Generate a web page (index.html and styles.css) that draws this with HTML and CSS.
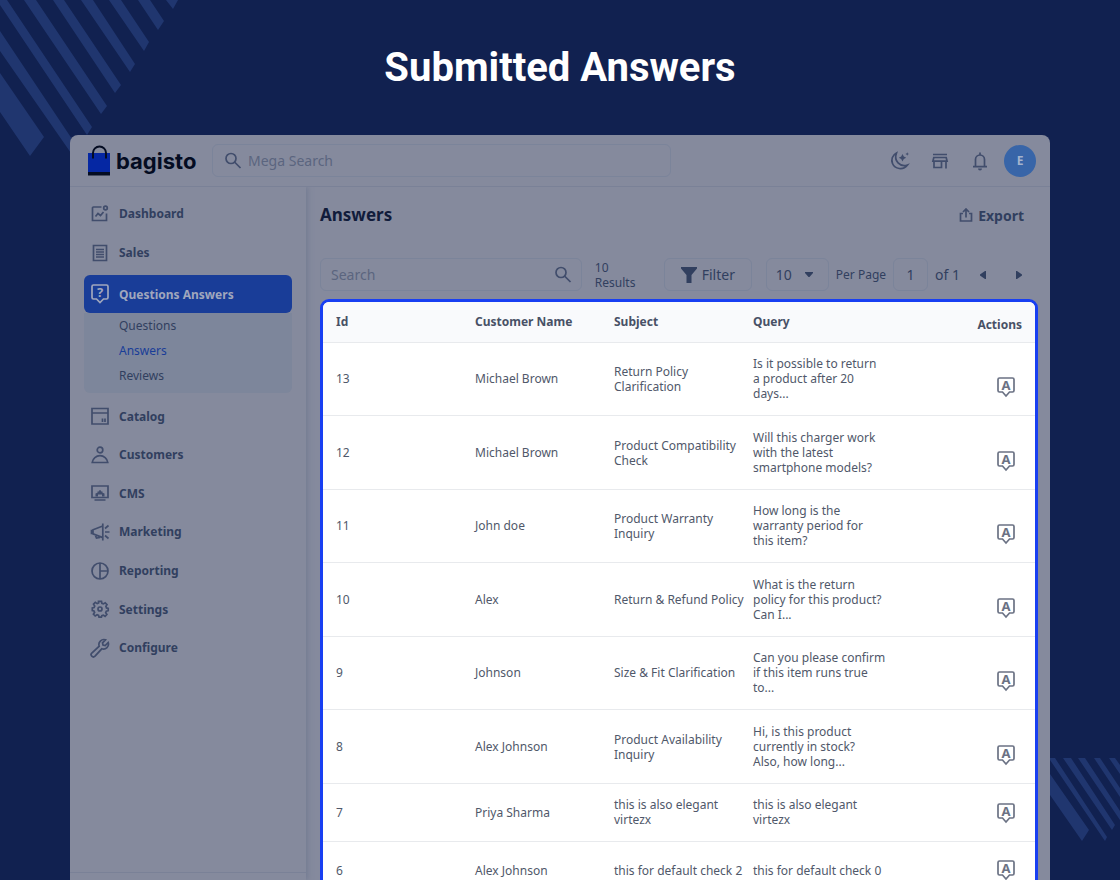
FILE: index.html
```html
<!DOCTYPE html>
<html lang="en">
<head>
  <meta charset="UTF-8" />
  <meta name="viewport" content="width=device-width, initial-scale=1.0" />
  <title>Submitted Answers</title>
  <link rel="stylesheet" href="styles.css">
</head>
<body>

  <!-- background stripes -->
  <svg class="stripes stripes-top" width="180" height="158" viewBox="0 0 180 158" aria-hidden="true">
    <path d="M0 73L44 137L30 156L0 112zM0 31L78 148L73 156L0 51zM0 0H7L92 127L87 135L0 5zM24 0H36L107 106L101 114zM53 0H64L121 85L115 93zM81 0H93L135 64L130 72zM109 0H121L149 42L144 51zM138 0H150L164 21L158 30zM166 0H178L173 9z"/>
  </svg>
  <svg class="stripes stripes-bottom" width="70" height="84" viewBox="0 0 70 84" aria-hidden="true">
    <path d="M0 16L39 72L32 83L0 37zM0 0H5L57 79L55 83L0 2zM13 0H21L65 67L62 72zM28 0H35L70 53V62zM44 0H50L70 30V39zM59 0H65L70 7V16z"/>
  </svg>

  <h1 class="page-title">Submitted Answers</h1>

  <div class="panel">
    <header class="topbar">
      <a class="logo" href="#">
        <svg width="22" height="31" viewBox="0 0 22 31" aria-hidden="true">
          <path fill="#0527a3" d="M0 8h22v19H0z"/>
          <path fill="#040c22" d="M0 27h22v3.500H0z"/>
          <path fill="none" stroke="#040c22" stroke-width="2" d="M5 13.500V8a6.500 6.500 0 0 1 13 0v5.500"/>
        </svg>
        <span>bagisto</span>
      </a>
      <label class="mega-search">
        <svg class="icon" width="18" height="18" viewBox="0 0 18 18"><circle cx="7" cy="6.500" r="5"/><path d="M10.500 10L16.500 16"/></svg>
        <input type="text" placeholder="Mega Search" aria-label="Mega Search">
      </label>
      <div class="top-actions">
        <button aria-label="Dark mode">
          <svg class="icon" width="20" height="20" viewBox="0 0 20 20"><path d="M6.500 2C2.500 4 .8 8.500 2.500 12.500c2.300 5.500 10.500 7.300 15 1.500C10 16.500 3.500 10 6.500 2z"/><path class="solid" d="M12.500 3l1.300 2.400 2.400 1.300-2.400 1.300-1.300 2.400-1.300-2.400-2.400-1.300 2.400-1.300zM17.200 1.200l.6 1.200 1.200.6-1.200.6-.6 1.200-.6-1.200-1.200-.6 1.200-.6z"/></svg>
        </button>
        <button aria-label="Visit shop">
          <svg class="icon" width="18" height="18" viewBox="0 0 18 18"><path d="M2 2.500h14M2.800 5.500h12.400l.9 3.700H1.900zM3 9.500v6h7.500v-6M15 9.500v7"/></svg>
        </button>
        <button aria-label="Notifications">
          <svg class="icon" width="18" height="20" viewBox="0 0 18 20"><path d="M4.500 15.500V8.500a4.500 4.500 0 0 1 9 0v7M2 15.700h14M9 1.500v2"/><path class="solid" d="M7 17.500h4a2 2 0 0 1-4 0z"/></svg>
        </button>
        <button class="avatar">E</button>
      </div>
    </header>

    <div class="body">
      <aside class="sidebar">
        <nav>
          <div class="nav-group nav-first">
            <a href="#"><svg class="icon" width="20" height="20" viewBox="0 0 20 20"><path d="M11.500 3H3.500a1 1 0 0 0-1 1v12.500h14V9.500M5.500 12.500l2.500-3 2.500 2 3-3.500"/><circle cx="15.500" cy="4" r="1.800"/></svg>Dashboard</a>
            <a href="#"><svg class="icon" width="20" height="20" viewBox="0 0 20 20"><path d="M3.500 2.500h13v15h-13zM6 6.500h8M6 9h8M6 11.500h8M6 14h8"/></svg>Sales</a>
          </div>
          <div class="nav-open">
            <a class="active" href="#"><svg class="icon" width="20" height="22" viewBox="0 0 20 22"><path d="M3.500 2h13A1.500 1.500 0 0 1 18 3.500v11a1.500 1.500 0 0 1-1.500 1.500h-3L10 19.500 6.500 16h-3A1.500 1.500 0 0 1 2 14.500v-11A1.500 1.500 0 0 1 3.500 2z"/><text x="10" y="13.500" text-anchor="middle">?</text></svg>Questions Answers</a>
            <div class="subnav">
              <a href="#">Questions</a>
              <a class="current" href="#">Answers</a>
              <a href="#">Reviews</a>
            </div>
          </div>
          <div class="nav-group nav-rest">
            <a href="#"><svg class="icon" width="20" height="20" viewBox="0 0 20 20"><path d="M2 2.500h16v15.500H2zM2 7h16M12.500 12.500v3.500M15 12.500v3.500"/></svg>Catalog</a>
            <a href="#"><svg class="icon" width="20" height="20" viewBox="0 0 20 20"><circle cx="10" cy="5" r="2.800"/><path d="M2.200 17.500c.5-4 4-6.800 7.800-6.800s7.300 2.800 7.800 6.800z"/></svg>Customers</a>
            <a href="#"><svg class="icon" width="20" height="20" viewBox="0 0 20 20"><path d="M2 3h16v11.500H2zM4.500 17h11"/><path class="solid" d="M5.500 13.500v-3l2-.7V8.500h1.200l.6-1.200h1.400l.6 1.200h1.200v1.300l2 .7v3h-2.500v-2h-4v2z"/></svg>CMS</a>
            <a href="#"><svg class="icon" width="20" height="20" viewBox="0 0 20 20"><path d="M12.800 1.500v17M12.800 4L3 7.800v4l9.800 3.800M3 8.500H1.500v3H3M5 12.500l1.500 3.500 3.500-.5M15 10h4.500M15 6.500l3.500-3M15 13.500l3.500 3"/></svg>Marketing</a>
            <a href="#"><svg class="icon" width="20" height="20" viewBox="0 0 20 20"><circle cx="10" cy="10" r="8"/><path d="M10 2v16M10 10h8"/></svg>Reporting</a>
            <a href="#"><svg class="icon" width="20" height="20" viewBox="0 0 20 20"><path d="M8.500 2.300h3l.4 2 1.500.6 1.800-1.100 1.800 1.800-1.100 1.800.6 1.500 1.700.4v2.400l-1.900.5-.6 1.500 1.200 1.800-1.800 1.800-1.800-1.200-1.500.6-.4 1.400h-2.400l-.4-1.700-1.500-.6-1.900 1.200-1.800-1.800 1.200-1.900-.6-1.400-1.700-.4V8.900l1.800-.4.6-1.400-1.200-1.900 1.800-1.800 1.900 1.200 1.400-.6z"/><circle cx="10" cy="10" r="2"/></svg>Settings</a>
            <a href="#"><svg class="icon" width="20" height="20" viewBox="0 0 20 20"><path d="M15.500 1.800a5 5 0 0 0-6.300 6.400L1.800 15a2.200 2.200 0 0 0 3.200 3.200l6.800-7.400a5 5 0 0 0 6.400-6.300l-3 3-2.200-.5-.5-2.200z"/></svg>Configure</a>
          </div>
        </nav>
        <div class="sidebar-foot"></div>
      </aside>

      <main>
        <div class="heading">
          <h2>Answers</h2>
          <button class="export">
            <svg class="icon" width="14" height="14" viewBox="0 0 14 14"><path d="M4 5.500H1.500V13h11V5.500H10M7 9.500V1.500M4 4l3-3 3 3"/></svg>
            Export
          </button>
        </div>

        <div class="toolbar">
          <label class="table-search">
            <input type="text" placeholder="Search" aria-label="Search">
            <svg class="icon" width="18" height="18" viewBox="0 0 18 18"><circle cx="7" cy="6.500" r="5"/><path d="M10.500 10L16.500 16"/></svg>
          </label>
          <p class="results">10 Results</p>
          <button class="filter">
            <svg width="16" height="16" viewBox="0 0 16 16" aria-hidden="true"><path fill="currentColor" d="M0 0h16v1.500L10.500 8v8h-5V8L0 1.500z"/></svg>
            Filter
          </button>
          <div class="per-page">
            <select id="perPage"><option>10</option><option>20</option><option>50</option></select>
            <svg class="caret" width="8" height="6" viewBox="0 0 8 6" aria-hidden="true"><path fill="currentColor" d="M0 0h8v1L4.500 5h-1L0 1z"/></svg>
          </div>
          <label class="per-page-label" for="perPage">Per Page</label>
          <input class="page-no" type="text" value="1" aria-label="Page">
          <span class="page-of">of 1</span>
          <div class="pager">
            <button aria-label="Previous page"><svg width="6" height="8" viewBox="0 0 6 8"><path fill="currentColor" d="M6 0v8H5L0 4.500v-1L5 0z"/></svg></button>
            <button aria-label="Next page"><svg width="6" height="8" viewBox="0 0 6 8"><path fill="currentColor" d="M0 0h1l5 3.500v1L1 8H0z"/></svg></button>
          </div>
        </div>

        <div class="table-box">
          <table>
            <thead>
              <tr><th>Id</th><th>Customer Name</th><th>Subject</th><th>Query</th><th>Actions</th></tr>
            </thead>
            <tbody>
              <tr><td>13</td><td>Michael Brown</td><td>Return Policy Clarification</td><td>Is it possible to return a product after 20 days...</td><td><a href="#" aria-label="Answer 13"><svg class="icon" width="20" height="22" viewBox="0 0 20 22"><path d="M3.500 2h13A1.500 1.500 0 0 1 18 3.500v11a1.500 1.500 0 0 1-1.500 1.500h-3L10 20 6.500 16h-3A1.500 1.500 0 0 1 2 14.500v-11A1.500 1.500 0 0 1 3.500 2z"/><text x="10" y="13.500" text-anchor="middle">A</text></svg></a></td></tr>
              <tr><td>12</td><td>Michael Brown</td><td>Product Compatibility Check</td><td>Will this charger work with the latest smartphone models?</td><td><a href="#" aria-label="Answer 12"><svg class="icon" width="20" height="22" viewBox="0 0 20 22"><path d="M3.500 2h13A1.500 1.500 0 0 1 18 3.500v11a1.500 1.500 0 0 1-1.500 1.500h-3L10 20 6.500 16h-3A1.500 1.500 0 0 1 2 14.500v-11A1.500 1.500 0 0 1 3.500 2z"/><text x="10" y="13.500" text-anchor="middle">A</text></svg></a></td></tr>
              <tr><td>11</td><td>John doe</td><td>Product Warranty Inquiry</td><td>How long is the warranty period for this item?</td><td><a href="#" aria-label="Answer 11"><svg class="icon" width="20" height="22" viewBox="0 0 20 22"><path d="M3.500 2h13A1.500 1.500 0 0 1 18 3.500v11a1.500 1.500 0 0 1-1.500 1.500h-3L10 20 6.500 16h-3A1.500 1.500 0 0 1 2 14.500v-11A1.500 1.500 0 0 1 3.500 2z"/><text x="10" y="13.500" text-anchor="middle">A</text></svg></a></td></tr>
              <tr><td>10</td><td>Alex</td><td>Return &amp; Refund Policy</td><td>What is the return policy for this product? Can I...</td><td><a href="#" aria-label="Answer 10"><svg class="icon" width="20" height="22" viewBox="0 0 20 22"><path d="M3.500 2h13A1.500 1.500 0 0 1 18 3.500v11a1.500 1.500 0 0 1-1.500 1.500h-3L10 20 6.500 16h-3A1.500 1.500 0 0 1 2 14.500v-11A1.500 1.500 0 0 1 3.500 2z"/><text x="10" y="13.500" text-anchor="middle">A</text></svg></a></td></tr>
              <tr><td>9</td><td>Johnson</td><td>Size &amp; Fit Clarification</td><td>Can you please confirm if this item runs true to...</td><td><a href="#" aria-label="Answer 9"><svg class="icon" width="20" height="22" viewBox="0 0 20 22"><path d="M3.500 2h13A1.500 1.500 0 0 1 18 3.500v11a1.500 1.500 0 0 1-1.500 1.500h-3L10 20 6.500 16h-3A1.500 1.500 0 0 1 2 14.500v-11A1.500 1.500 0 0 1 3.500 2z"/><text x="10" y="13.500" text-anchor="middle">A</text></svg></a></td></tr>
              <tr><td>8</td><td>Alex Johnson</td><td>Product Availability Inquiry</td><td>Hi, is this product currently in stock? Also,&nbsp;how long...</td><td><a href="#" aria-label="Answer 8"><svg class="icon" width="20" height="22" viewBox="0 0 20 22"><path d="M3.500 2h13A1.500 1.500 0 0 1 18 3.500v11a1.500 1.500 0 0 1-1.500 1.500h-3L10 20 6.500 16h-3A1.500 1.500 0 0 1 2 14.500v-11A1.500 1.500 0 0 1 3.500 2z"/><text x="10" y="13.500" text-anchor="middle">A</text></svg></a></td></tr>
              <tr><td>7</td><td>Priya Sharma</td><td>this is also elegant virtezx</td><td>this is also elegant virtezx</td><td><a href="#" aria-label="Answer 7"><svg class="icon" width="20" height="22" viewBox="0 0 20 22"><path d="M3.500 2h13A1.500 1.500 0 0 1 18 3.500v11a1.500 1.500 0 0 1-1.500 1.500h-3L10 20 6.500 16h-3A1.500 1.500 0 0 1 2 14.500v-11A1.500 1.500 0 0 1 3.500 2z"/><text x="10" y="13.500" text-anchor="middle">A</text></svg></a></td></tr>
              <tr><td>6</td><td>Alex Johnson</td><td>this for default check 2</td><td>this for default check 0</td><td><a href="#" aria-label="Answer 6"><svg class="icon" width="20" height="22" viewBox="0 0 20 22"><path d="M3.500 2h13A1.500 1.500 0 0 1 18 3.500v11a1.500 1.500 0 0 1-1.500 1.500h-3L10 20 6.500 16h-3A1.500 1.500 0 0 1 2 14.500v-11A1.500 1.500 0 0 1 3.500 2z"/><text x="10" y="13.500" text-anchor="middle">A</text></svg></a></td></tr>
            </tbody>
          </table>
        </div>
      </main>
    </div>
  </div>

</body>
</html>
```
FILE: styles.css
```css
* { box-sizing: border-box; }

body {
  margin: 0;
  height: 100vh;
  display: flex;
  flex-direction: column;
  position: relative;
  overflow: hidden;
  background: #112150;
  color: #313f5f;
  font-family: "Noto Sans", sans-serif;
  font-size: 12px;
  line-height: 15px;
}

a { color: inherit; text-decoration: none; }

button, input, select {
  margin: 0;
  padding: 0;
  border: none;
  background: none;
  color: inherit;
  font-family: inherit;
  font-size: 14px;
}

button { cursor: pointer; }

svg { display: block; flex: none; }

.icon {
  fill: none;
  stroke: #414d6c;
  stroke-width: 1.7;
}

.icon .solid { fill: #414d6c; stroke: none; }

.icon text {
  font-size: 13px;
  font-weight: bold;
  stroke: none;
}

.stripes { position: absolute; fill: #20366f; }
.stripes-top { top: 0; left: 0; }
.stripes-bottom { right: 0; bottom: 38px; }

.page-title {
  margin: 0;
  padding: 44px 0 43px;
  font-family: Roboto, sans-serif;
  font-size: 40px;
  font-weight: bold;
  line-height: 48px;
  text-align: center;
  color: #fff;
}

.panel {
  flex: 1;
  min-height: 0;
  margin: 0 70px;
  display: flex;
  flex-direction: column;
  position: relative;
  overflow: hidden;
  border-radius: 8px 8px 0 0;
  background: #858a9d;
}

/* top bar */

.topbar {
  height: 52px;
  flex: none;
  display: flex;
  align-items: center;
  padding: 0 14px 0 18px;
  border-bottom: 1px solid #7a8197;
}

.logo {
  width: 124px;
  display: flex;
  align-items: center;
  gap: 6px;
  font-family: Inter, sans-serif;
  font-size: 22px;
  font-weight: bold;
  line-height: 28px;
  color: #040c22;
}

.mega-search {
  flex: 0 1 459px;
  height: 33px;
  display: flex;
  align-items: center;
  gap: 6px;
  padding: 0 11px;
  border: 1px solid #7b849a;
  border-radius: 6px;
}

.mega-search input, .table-search input { flex: 1; min-width: 0; outline: none; }

input::placeholder { color: #5b657f; opacity: 1; }

.top-actions {
  margin-left: auto;
  display: flex;
  align-items: center;
  gap: 4px;
}

.top-actions button {
  width: 36px;
  height: 32px;
  display: flex;
  align-items: center;
  justify-content: center;
}

.top-actions .avatar {
  width: 32px;
  margin-left: 2px;
  border-radius: 50%;
  background: #3865a8;
  color: #a3b3cd;
  font-size: 12px;
  font-weight: bold;
}

.body { flex: 1; min-height: 0; display: flex; }

/* sidebar */

.sidebar {
  width: 236px;
  flex: none;
  display: flex;
  flex-direction: column;
  box-shadow: 2px 0 5px #747c93;
  clip-path: inset(0 -10px 0 0);
}

.sidebar nav {
  padding: 7px 14px 0;
  font-weight: bold;
}

.nav-group { display: grid; grid-auto-rows: 1fr; }
.nav-first { height: 78px; margin-bottom: 3px; }
.nav-rest { height: 270px; margin-top: 4px; }

.nav-group a, .nav-open .active {
  display: flex;
  align-items: center;
  gap: 9px;
  padding: 0 6px;
}

.nav-open .active {
  height: 38px;
  border-radius: 6px;
  background: #193d98;
  color: #a0a7bd;
}

.active .icon { stroke: #a0a7bd; }
.active .icon text { fill: #a0a7bd; }

.subnav {
  height: 80px;
  display: flex;
  flex-direction: column;
  gap: 10px;
  padding: 5px 35px;
  border-radius: 0 0 6px 6px;
  background: #7d869b;
  font-weight: normal;
}

.subnav .current { color: #193d98; }

.sidebar-foot {
  height: 8px;
  margin-top: auto;
  border-top: 1px solid #7a8197;
}

/* content */

main {
  flex: 1;
  min-width: 0;
  padding: 14px 12px 0 14px;
}

.heading {
  height: 28px;
  display: flex;
  align-items: center;
  justify-content: space-between;
}

.heading h2 {
  margin: 0;
  font-size: 17px;
  line-height: 24px;
  color: #111c3b;
}

.export {
  display: flex;
  align-items: center;
  gap: 5px;
  padding-right: 14px;
  font-weight: bold;
}

.toolbar {
  height: 33px;
  margin: 29px 0 8px;
  display: flex;
  align-items: center;
  font-size: 14px;
}

.table-search {
  flex: 1;
  height: 33px;
  display: flex;
  align-items: center;
  padding: 0 9px 0 10px;
  border: 1px solid #7b849a;
  border-radius: 6px;
}

.results {
  width: 48px;
  margin: 0 21px 0 13px;
  font-size: 12px;
}

.filter {
  width: 88px;
  height: 33px;
  display: flex;
  align-items: center;
  justify-content: center;
  gap: 5px;
  border: 1px solid #7b849a;
  border-radius: 6px;
}

.per-page { position: relative; margin: 0 7px 0 14px; }

.per-page select {
  appearance: none;
  width: 63px;
  height: 33px;
  padding: 0 9px;
  border: 1px solid #7b849a;
  border-radius: 6px;
}

.caret { position: absolute; top: 14px; right: 16px; pointer-events: none; }

.per-page-label { font-size: 12px; white-space: nowrap; }

.page-no {
  width: 35px;
  height: 33px;
  margin: 0 7px;
  border: 1px solid #7b849a;
  border-radius: 6px;
  text-align: center;
}

.page-of { white-space: nowrap; }

.pager { display: flex; gap: 12px; margin: 0 7px 0 11px; }

.pager button {
  width: 24px;
  height: 24px;
  display: flex;
  align-items: center;
  justify-content: center;
}

/* table */

.table-box {
  overflow: hidden;
  border: 3px solid #183ff2;
  border-radius: 9px;
  background: #fff;
}

table {
  width: 100%;
  table-layout: fixed;
  border-collapse: separate;
  border-spacing: 0;
  color: #50586a;
}

th, td {
  padding: 13px 6px 14px 0;
  border-bottom: 1px solid #e8eaed;
  text-align: left;
}

tbody tr:nth-child(even) td { padding-top: 14px; }

th {
  padding: 12px 0 13px;
  background: #f9fafc;
  color: #485166;
}

th:first-child, td:first-child { padding-left: 13px; }
th:nth-child(-n+4) { width: 139px; }
th:first-child { width: 152px; }

th:last-child, td:last-child {
  vertical-align: bottom;
  text-align: right;
}

th:last-child { padding: 15px 13px 10px 0; }
td:last-child { padding-right: 19px; }

td a { display: inline-block; padding: 3px 0; vertical-align: bottom; }
td .icon { stroke: #6b7284; }
td .icon text { fill: #6b7284; }
```
